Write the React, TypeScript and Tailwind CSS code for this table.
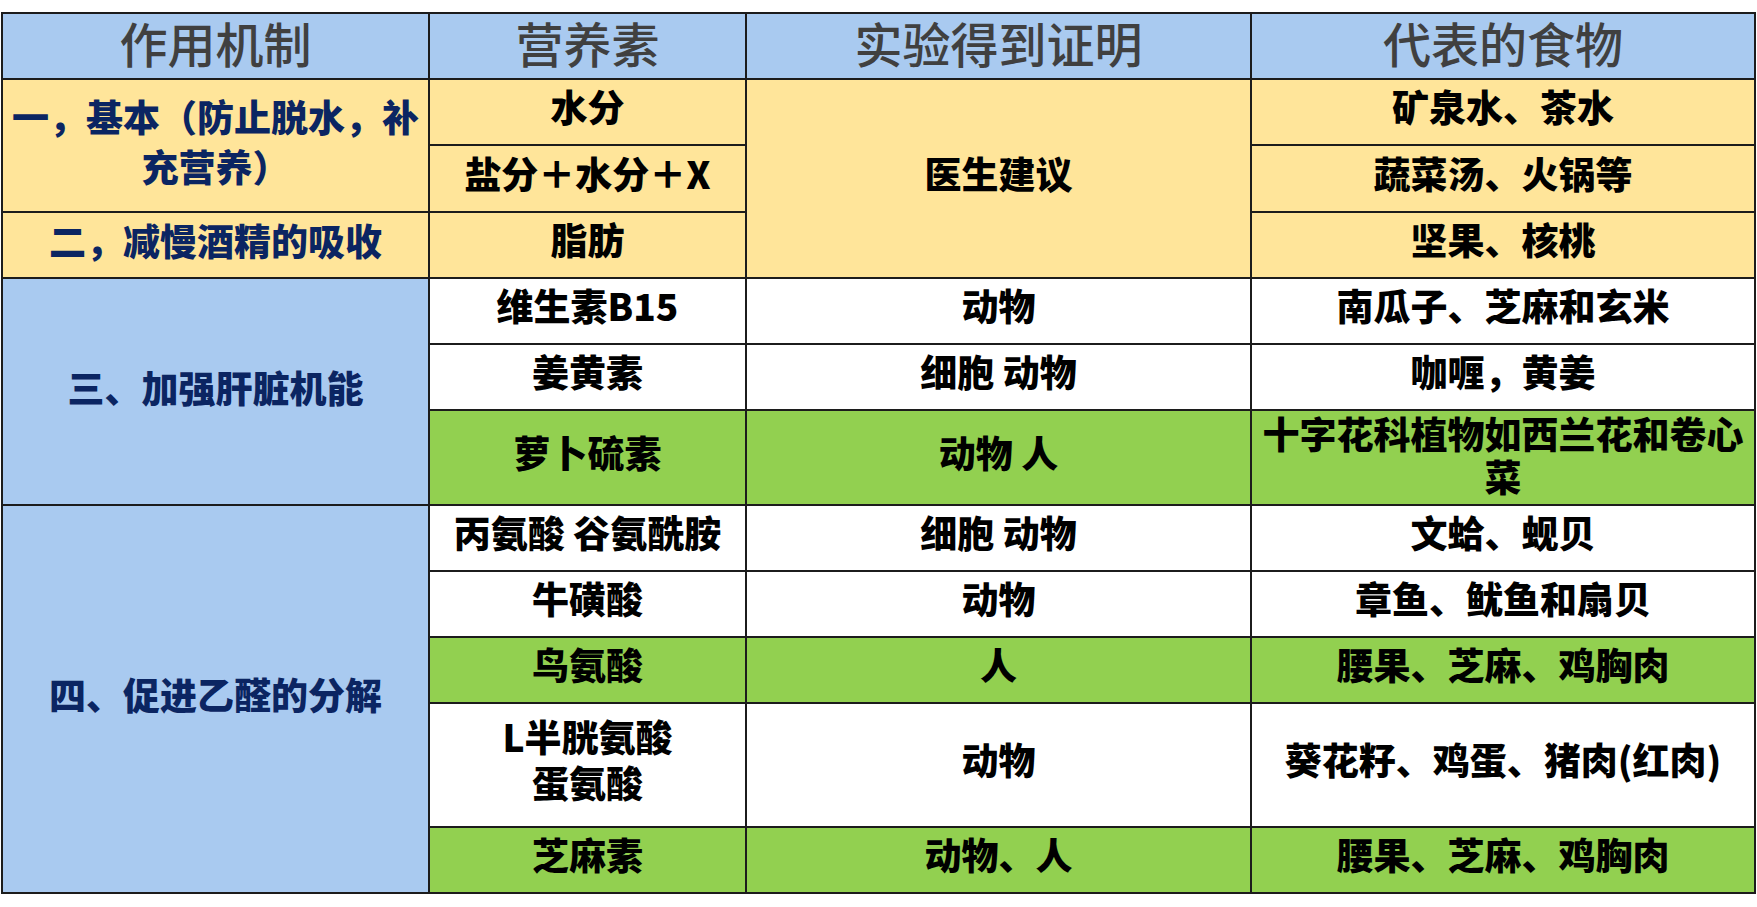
import React from "react";

const Y = "bg-[#ffe59a]";
const B = "bg-[#a9caf0]";
const G = "bg-[#92d050]";
const W = "bg-white";

const cell = "border-2 border-[#1c1c1c] text-center align-middle p-0 pb-[12px] font-black text-black text-[37px] leading-[44px]";
const c1 = "border-2 border-[#1c1c1c] text-center align-middle p-0 pb-[10px] font-black text-[#0b2562] text-[37px] leading-[50px]";

export default function App() {
  return (
    <div className="w-[1757px] h-[907px] bg-white pt-[12px] pl-[1px]" style={{ fontFamily: '"Noto Sans CJK SC", "Noto Sans", sans-serif' }}>
      <table className="table-fixed border-collapse w-[1753px]">
        <colgroup>
          <col className="w-[427px]" />
          <col className="w-[317px]" />
          <col className="w-[505px]" />
          <col className="w-[504px]" />
        </colgroup>
        <thead>
          <tr className={`h-[66px] ${B}`}>
            {["作用机制", "营养素", "实验得到证明", "代表的食物"].map((t) => (
              <th key={t} className="border-2 border-[#1c1c1c] text-center align-middle p-0 pb-[8px] font-medium text-[#404040] text-[48px] leading-[56px]">
                {t}
              </th>
            ))}
          </tr>
        </thead>
        <tbody>
          <tr className="h-[66px]">
            <td rowSpan={2} className={`${c1} ${Y} pb-0`}>
              一，基本（防止脱水，补<br />充营养）
            </td>
            <td className={`${cell} ${Y}`}>水分</td>
            <td rowSpan={3} className={`${cell} ${Y}`}>医生建议</td>
            <td className={`${cell} ${Y}`}>矿泉水、茶水</td>
          </tr>
          <tr className="h-[67px]">
            <td className={`${cell} ${Y}`}>盐分＋水分＋X</td>
            <td className={`${cell} ${Y}`}>蔬菜汤、火锅等</td>
          </tr>
          <tr className="h-[66px]">
            <td className={`${c1} ${Y}`}>二，减慢酒精的吸收</td>
            <td className={`${cell} ${Y}`}>脂肪</td>
            <td className={`${cell} ${Y}`}>坚果、核桃</td>
          </tr>
          <tr className="h-[66px]">
            <td rowSpan={3} className={`${c1} ${B}`}>三、加强肝脏机能</td>
            <td className={`${cell} ${W}`}>维生素B15</td>
            <td className={`${cell} ${W}`}>动物</td>
            <td className={`${cell} ${W}`}>南瓜子、芝麻和玄米</td>
          </tr>
          <tr className="h-[66px]">
            <td className={`${cell} ${W}`}>姜黄素</td>
            <td className={`${cell} ${W}`}>细胞 动物</td>
            <td className={`${cell} ${W}`}>咖喱，黄姜</td>
          </tr>
          <tr className="h-[95px]">
            <td className={`${cell} ${G}`}>萝卜硫素</td>
            <td className={`${cell} ${G}`}>动物 人</td>
            <td className="border-2 border-[#1c1c1c] text-center align-middle p-0 pb-[6px] font-black text-black text-[37px] leading-[43px] bg-[#92d050]">
              十字花科植物如西兰花和卷心<br />菜
            </td>
          </tr>
          <tr className="h-[66px]">
            <td rowSpan={5} className={`${c1} ${B}`}>四、促进乙醛的分解</td>
            <td className={`${cell} ${W}`}>丙氨酸 谷氨酰胺</td>
            <td className={`${cell} ${W}`}>细胞 动物</td>
            <td className={`${cell} ${W}`}>文蛤、蚬贝</td>
          </tr>
          <tr className="h-[66px]">
            <td className={`${cell} ${W}`}>牛磺酸</td>
            <td className={`${cell} ${W}`}>动物</td>
            <td className={`${cell} ${W}`}>章鱼、鱿鱼和扇贝</td>
          </tr>
          <tr className="h-[66px]">
            <td className={`${cell} ${G}`}>鸟氨酸</td>
            <td className={`${cell} ${G}`}>人</td>
            <td className={`${cell} ${G}`}>腰果、芝麻、鸡胸肉</td>
          </tr>
          <tr className="h-[124px]">
            <td className={`${cell} ${W} leading-[46px]`}>
              L半胱氨酸<br />蛋氨酸
            </td>
            <td className={`${cell} ${W}`}>动物</td>
            <td className={`${cell} ${W}`}>葵花籽、鸡蛋、猪肉(红肉)</td>
          </tr>
          <tr className="h-[66px]">
            <td className={`${cell} ${G}`}>芝麻素</td>
            <td className={`${cell} ${G}`}>动物、人</td>
            <td className={`${cell} ${G}`}>腰果、芝麻、鸡胸肉</td>
          </tr>
        </tbody>
      </table>
    </div>
  );
}
